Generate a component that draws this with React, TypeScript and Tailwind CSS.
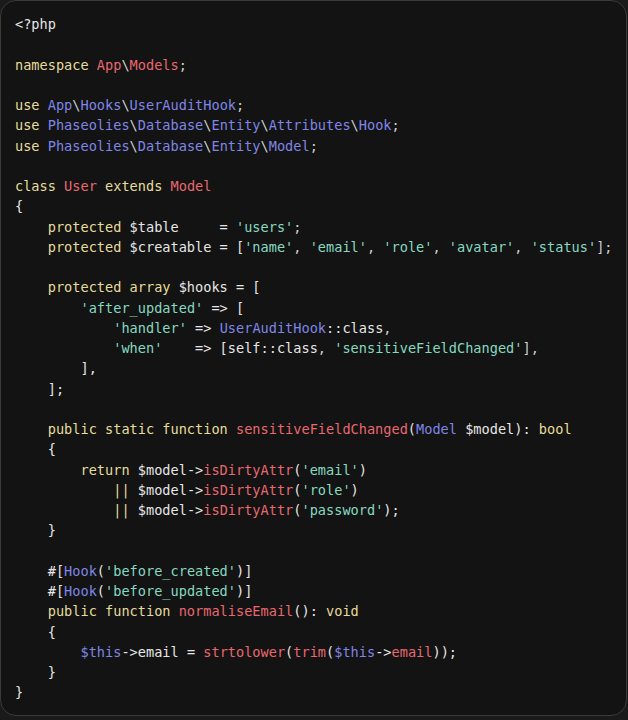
import React from "react";

type Tok = [string, string];

const K = "text-[#e6dc9c]"; // keyword yellow
const R = "text-[#e8686f]"; // red
const B = "text-[#7f86e6]"; // blue/purple
const S = "text-[#86d9c1]"; // string teal
const D = "text-[#e6e6e6]"; // default
const P = "text-[#d0d0d0]"; // punctuation

const lines: Tok[][] = [
  [["<?php", D]],
  [],
  [["namespace ", K], ["App", R], ["\\", P], ["Models", R], [";", P]],
  [],
  [["use ", K], ["App", B], ["\\", P], ["Hooks", B], ["\\", P], ["UserAuditHook", B], [";", P]],
  [["use ", K], ["Phaseolies", B], ["\\", P], ["Database", B], ["\\", P], ["Entity", B], ["\\", P], ["Attributes", B], ["\\", P], ["Hook", B], [";", P]],
  [["use ", K], ["Phaseolies", B], ["\\", P], ["Database", B], ["\\", P], ["Entity", B], ["\\", P], ["Model", B], [";", P]],
  [],
  [["class ", K], ["User", R], [" extends ", K], ["Model", R]],
  [["{", D]],
  [["    protected ", K], ["$table", D], ["     = ", D], ["'users'", S], [";", P]],
  [["    protected ", K], ["$creatable", D], [" = [", D], ["'name'", S], [", ", P], ["'email'", S], [", ", P], ["'role'", S], [", ", P], ["'avatar'", S], [", ", P], ["'status'", S], ["];", P]],
  [],
  [["    protected array ", K], ["$hooks", D], [" = [", D]],
  [["        ", D], ["'after_updated'", S], [" => [", D]],
  [["            ", D], ["'handler'", S], [" => ", D], ["UserAuditHook", B], ["::class", D], [",", P]],
  [["            ", D], ["'when'", S], ["    => [", D], ["self::class", D], [", ", P], ["'sensitiveFieldChanged'", S], ["],", P]],
  [["        ],", D]],
  [["    ];", D]],
  [],
  [["    public static function ", K], ["sensitiveFieldChanged", R], ["(", D], ["Model", B], [" $model", D], ["): ", D], ["bool", K]],
  [["    {", D]],
  [["        return ", K], ["$model", D], ["->", D], ["isDirtyAttr", R], ["(", D], ["'email'", S], [")", D]],
  [["            ", D], ["||", K], [" $model", D], ["->", D], ["isDirtyAttr", R], ["(", D], ["'role'", S], [")", D]],
  [["            ", D], ["||", K], [" $model", D], ["->", D], ["isDirtyAttr", R], ["(", D], ["'password'", S], [");", D]],
  [["    }", D]],
  [],
  [["    #[", D], ["Hook", B], ["(", D], ["'before_created'", S], [")]", D]],
  [["    #[", D], ["Hook", B], ["(", D], ["'before_updated'", S], [")]", D]],
  [["    public function ", K], ["normaliseEmail", R], ["(): ", D], ["void", K]],
  [["    {", D]],
  [["        ", D], ["$this", B], ["->", D], ["email", D], [" = ", D], ["strtolower", R], ["(", D], ["trim", R], ["(", D], ["$this", B], ["->", D], ["email", R], ["));", D]],
  [["    }", D]],
  [["}", D]],
];

export default function App() {
  return (
    <div className="w-[628px] h-[720px] bg-[#1a1a1a]">
      <div className="w-[627px] h-[716px] rounded-[16px] border border-[#3a3a3a] bg-[#131313] pl-[14px] pt-[13px] overflow-hidden">
        <pre
          className="m-0 text-[13.6px] leading-[20.25px] text-[#e6e6e6]"
          style={{ fontFamily: '"DejaVu Sans Mono", "Liberation Mono", monospace' }}
        >
          {lines.map((line, i) => (
            <div key={i} className="h-[20.25px] whitespace-pre">
              {line.length === 0 ? " " : line.map(([t, c], j) => (
                <span key={j} className={c}>{t}</span>
              ))}
            </div>
          ))}
        </pre>
      </div>
    </div>
  );
}
